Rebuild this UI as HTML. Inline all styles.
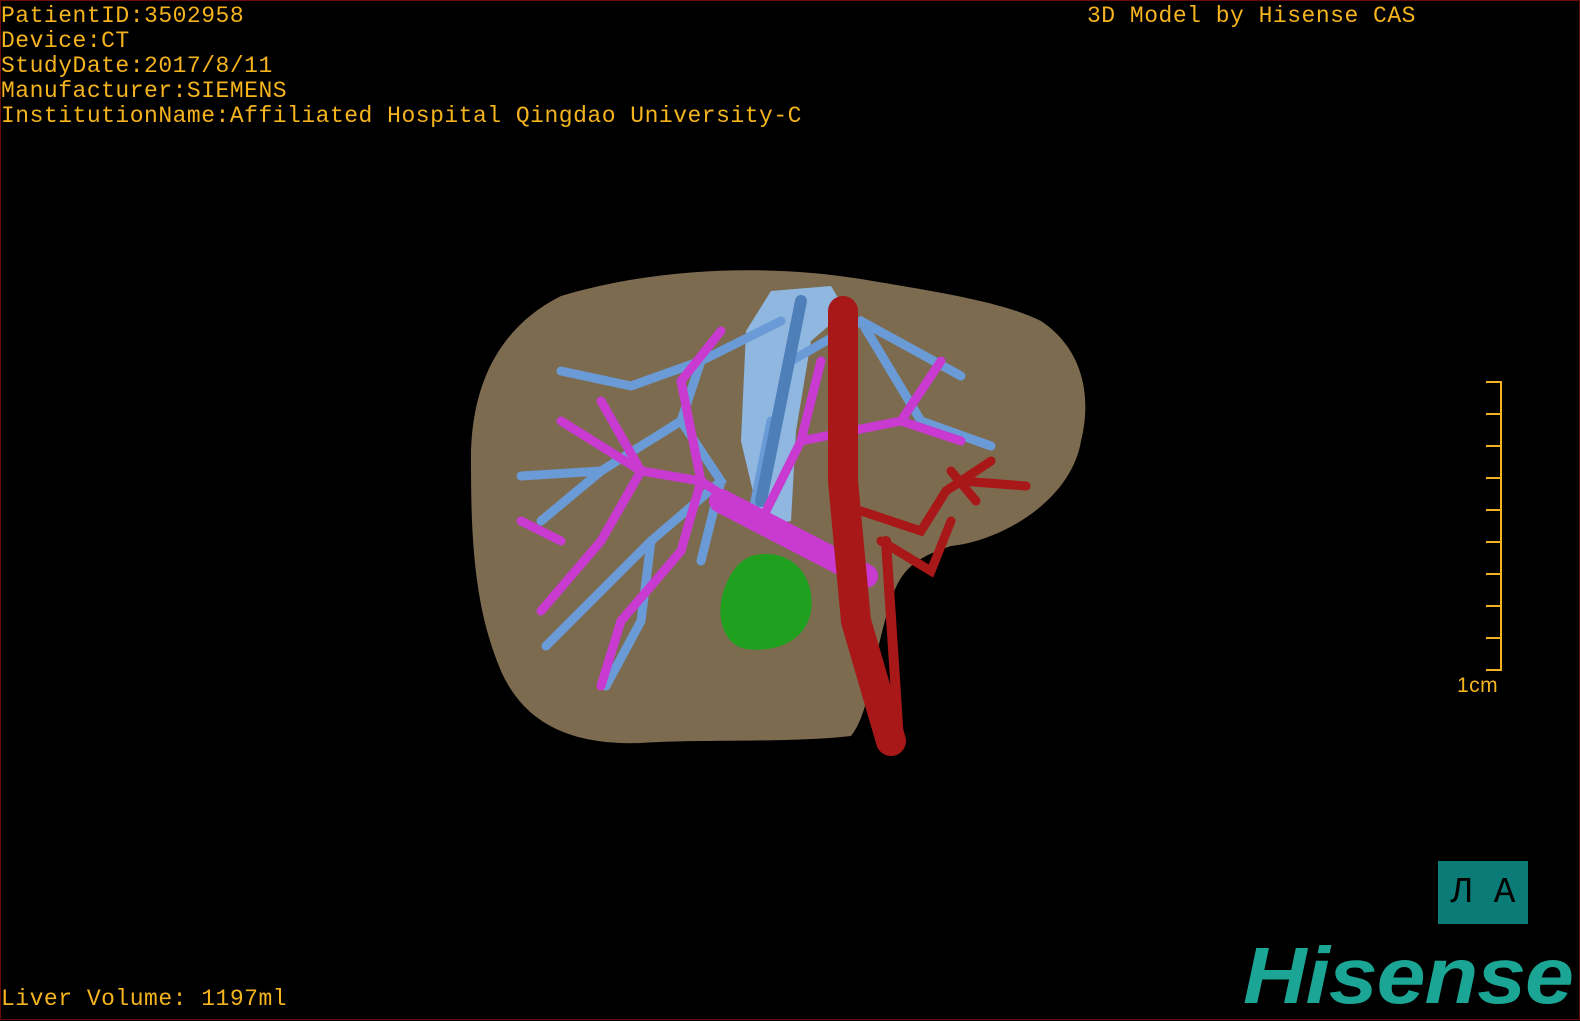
<!DOCTYPE html>
<html><head><meta charset="utf-8"><style>
html,body{margin:0;padding:0;background:#000;width:1580px;height:1020px;overflow:hidden}
#f{position:absolute;left:0;top:0;width:1578px;height:1018px;border:1px solid #6a0a0a;background:#000}
.t{position:absolute;color:#f5b41e;font-family:"Liberation Mono",monospace;font-size:23px;line-height:25px;white-space:pre;letter-spacing:0.5px}
#logo{position:absolute;left:1242px;top:934px;color:#1aa594;font-family:"Liberation Sans",sans-serif;font-weight:bold;font-style:italic;font-size:80px;letter-spacing:-1px;line-height:82px;transform:scaleX(1.1);transform-origin:0 0}
#btn{position:absolute;left:1437px;top:860px;width:90px;height:63px;background:#0b7b78;color:#000;font-family:"Liberation Mono",monospace;font-size:36px;line-height:63px;text-align:center}
</style></head><body><div id="f">
<div class="t" style="left:0;top:3px">PatientID:3502958
Device:CT
StudyDate:2017/8/11
Manufacturer:SIEMENS
InstitutionName:Affiliated Hospital Qingdao University-C</div>
<div class="t" style="left:1086px;top:3px">3D Model by Hisense CAS</div>
<div class="t" style="left:0;top:986px">Liver Volume: 1197ml</div>
<div class="t" style="left:1456px;top:672px;font-family:'Liberation Sans',sans-serif;font-size:21px">1cm</div>
<svg style="position:absolute;left:0;top:0" width="1580" height="1020">
<g stroke="#f5b41e" stroke-width="2" fill="none">
<path d="M1500 380V670"/>
<path d="M1485 381H1500M1485 413H1500M1485 445H1500M1485 477H1500M1485 509H1500M1485 541H1500M1485 573H1500M1485 605H1500M1485 637H1500M1485 669H1500"/>
</g>
<path d="M560 295C650 268 760 262 860 278C930 290 1000 300 1040 320C1085 350 1090 400 1080 440C1070 500 1000 540 950 545C920 555 900 565 890 600C870 660 870 710 850 735C790 742 700 738 640 742C560 745 520 715 500 670C470 600 470 520 470 450C472 380 500 325 560 295Z" fill="#7d6b4f"/>
<path d="M770 290L830 285L845 310L810 340L795 430L790 520L760 525L740 440L745 330Z" fill="#8fb7e0"/>
<g stroke="#6a9bd6" stroke-width="9" fill="none" stroke-linecap="round">
<path d="M780 320L700 360L630 385L560 370M700 360L680 420L600 470L540 520M680 420L720 480L650 540L590 600L545 645M650 540L640 620L605 685M790 360L860 320L960 375M860 320L920 420L990 445M600 470L520 475M720 480L700 560M770 420L750 520"/>
<path d="M800 300L760 500" stroke="#4f7fb8" stroke-width="12"/>
</g>
<g stroke="#c83ad0" stroke-width="9" fill="none" stroke-linecap="round">
<path d="M760 520L700 480L640 470L560 420M700 480L680 380L720 330M640 470L600 540L540 610M700 480L680 550L620 620L600 685M760 520L800 440L900 420L960 440M800 440L820 360M900 420L940 360M640 470L600 400M560 540L520 520"/>
<path d="M720 500L865 575" stroke-width="24"/>
</g>
<g stroke="#a81818" fill="none" stroke-linecap="round">
<path d="M842 310L842 480L855 620L890 740" stroke-width="30"/>
<path d="M885 540L898 740" stroke-width="10"/>
<path d="M860 510L920 530L945 490L990 460M880 540L930 570L950 520M960 480L1025 485M950 470L975 500" stroke-width="9"/>
</g>
<path d="M750 555C790 545 815 575 810 610C805 640 775 652 745 648C722 644 715 615 722 592C728 572 738 560 750 555Z" fill="#1fa01f"/>
</svg>
<div id="btn">Л A</div>
<div id="logo">Hisense</div>
</div></body></html>
